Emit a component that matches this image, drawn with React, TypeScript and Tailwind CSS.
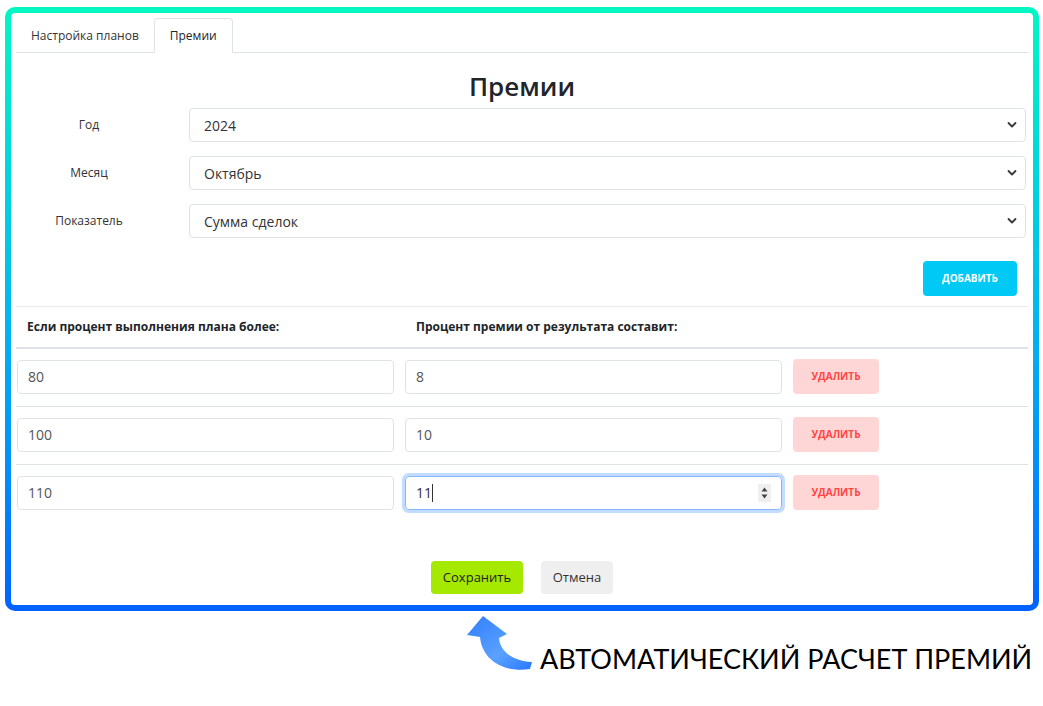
import React, { useState } from 'react';

const SELECTS = [
  { label: 'Год', value: '2024', options: ['2023', '2024', '2025'] },
  { label: 'Месяц', value: 'Октябрь', options: ['Сентябрь', 'Октябрь', 'Ноябрь'] },
  { label: 'Показатель', value: 'Сумма сделок', options: ['Сумма сделок', 'Количество сделок'] },
];

const INITIAL_ROWS = [
  { id: 1, from: '80', bonus: '8' },
  { id: 2, from: '100', bonus: '10' },
  { id: 3, from: '110', bonus: '11' },
];

function Chevron() {
  return (
    <svg className="pointer-events-none absolute right-[9px] top-1/2 -translate-y-1/2" width="10" height="7" viewBox="0 0 10 7">
      <path d="M1.5 1.5 L5 5 L8.5 1.5" fill="none" stroke="#343a40" strokeWidth="1.8" strokeLinecap="round" strokeLinejoin="round" />
    </svg>
  );
}

export default function App() {
  const [tab, setTab] = useState('bonus');
  const [rows, setRows] = useState(INITIAL_ROWS);

  const removeRow = (id: number) => setRows(prev => prev.filter(r => r.id !== id));
  const addRow = () => setRows(prev => [...prev, { id: Date.now(), from: '', bonus: '' }]);

  return (
    <div className="min-h-screen bg-white font-['Open_Sans','Noto_Sans',sans-serif] text-[#212529]">
      {/* gradient frame */}
      <div className="ml-[5px] mt-[7px] w-[1034px] rounded-[10px] bg-gradient-to-b from-[#00f7c2] via-[#00b9ee] to-[#0062ff] p-[6px]">
        <div className="rounded-[4px] bg-white px-[5px] pb-[11px] pt-[5px]">
          {/* tabs */}
          <div className="flex h-[35px] border-b border-[#dee2e6] text-[12px]">
            <button
              onClick={() => setTab('plans')}
              className={`h-[35px] px-[15px] ${tab === 'plans' ? '-mb-px rounded-t-[4px] border border-[#dee2e6] border-b-white bg-white' : 'text-[#333]'}`}
            >
              Настройка планов
            </button>
            <button
              onClick={() => setTab('bonus')}
              className={`h-[35px] px-[15px] ${tab === 'bonus' ? '-mb-px rounded-t-[4px] border border-[#dee2e6] border-b-white bg-white' : 'text-[#333]'}`}
            >
              Премии
            </button>
          </div>

          <h1 className="mt-[17px] text-center text-[26px] font-semibold leading-[32px] text-[#212529]">Премии</h1>

          {/* filters */}
          <div className="mt-[6px] flex flex-col gap-[14px] pr-[2px]">
            {SELECTS.map(s => (
              <div key={s.label} className="flex items-center">
                <label className="w-[146px] text-center text-[12px] text-[#333]">{s.label}</label>
                <div className="relative ml-[27px] flex-1">
                  <select
                    defaultValue={s.value}
                    className="h-[34px] w-full appearance-none rounded-[4px] border border-[#dee2e6] bg-white pl-[14px] text-[14px] text-[#333] outline-none"
                  >
                    {s.options.map(o => (
                      <option key={o} value={o}>{o}</option>
                    ))}
                  </select>
                  <Chevron />
                </div>
              </div>
            ))}
          </div>

          <div className="mt-[23px] flex justify-end pr-[11px]">
            <button
              onClick={addRow}
              className="h-[35px] w-[94px] rounded-[4px] bg-[#00c9f5] text-[10px] font-bold uppercase text-white"
            >
              Добавить
            </button>
          </div>

          <div className="mt-[10px] border-t border-[#e9ecef]" />

          {/* table */}
          <div className="grid h-[42px] grid-cols-[377px_377px_86px] items-center gap-x-[11px] border-b-2 border-[#dee2e6] px-px text-[12px] font-bold">
            <div className="pl-[10px]">Если процент выполнения плана более:</div>
            <div className="pl-[11px]">Процент премии от результата составит:</div>
            <div />
          </div>

          {rows.map((r, i) => {
            const last = i === rows.length - 1;
            return (
              <div
                key={r.id}
                className={`grid grid-cols-[377px_377px_86px] items-center gap-x-[11px] px-px pt-[10px] pb-[12px] ${last ? '' : 'border-b border-[#dee2e6]'}`}
              >
                <input
                  defaultValue={r.from}
                  className="h-[34px] rounded-[4px] border border-[#dee2e6] px-[10px] text-[14px] text-[#555] outline-none"
                />
                {last ? (
                  <div className="relative">
                    <input
                      defaultValue={r.bonus}
                      className="h-[34px] w-full rounded-[4px] border border-[#86b7fe] px-[10px] text-[14px] text-[#333] shadow-[0_0_0_3px_rgba(13,110,253,0.25)] outline-none"
                    />
                    <span className="pointer-events-none absolute left-[27px] top-[8px] h-[18px] w-px bg-[#333]" />
                    <svg className="pointer-events-none absolute right-[11px] top-1/2 -translate-y-1/2" width="13" height="18" viewBox="0 0 13 18">
                      <rect x="0" y="0" width="13" height="18" fill="#efefef" />
                      <path d="M3.5 7.5 L6.5 3.5 L9.5 7.5 Z" fill="#444" />
                      <path d="M3.5 10.5 L6.5 14.5 L9.5 10.5 Z" fill="#444" />
                    </svg>
                  </div>
                ) : (
                  <input
                    defaultValue={r.bonus}
                    className="h-[34px] rounded-[4px] border border-[#dee2e6] px-[10px] text-[14px] text-[#555] outline-none"
                  />
                )}
                <button
                  onClick={() => removeRow(r.id)}
                  className="h-[35px] rounded-[4px] bg-[#ffd6d6] text-[10px] font-bold uppercase text-[#ff4545]"
                >
                  Удалить
                </button>
              </div>
            );
          })}

          <div className="mt-[39px] flex justify-center gap-[18px] text-[13px]">
            <button className="h-[33px] w-[92px] rounded-[4px] bg-[#a6e900] text-[#222]">Сохранить</button>
            <button className="h-[33px] w-[72px] rounded-[4px] bg-[#efefef] text-[#333]">Отмена</button>
          </div>
        </div>
      </div>

      {/* caption */}
      <div className="flex items-start pl-[460px]">
        <svg width="80" height="68" viewBox="0 2 80 68">
          <defs>
            <linearGradient id="arrowGrad" x1="0" y1="0" x2="1" y2="1">
              <stop offset="0" stopColor="#2f7dff" />
              <stop offset="0.6" stopColor="#5aa2ff" />
              <stop offset="1" stopColor="#2a78ff" />
            </linearGradient>
          </defs>
          <path
            d="M23 7 L47 25 L39 29 C40 42 52 52 72 53 L70 60 C42 64 22 50 20 28 L7 26 Z"
            fill="url(#arrowGrad)"
          />
        </svg>
        <div className="mt-[34px] font-['Lato',sans-serif] text-[27px] leading-[27px] text-black">
          АВТОМАТИЧЕСКИЙ РАСЧЕТ ПРЕМИЙ
        </div>
      </div>
    </div>
  );
}
